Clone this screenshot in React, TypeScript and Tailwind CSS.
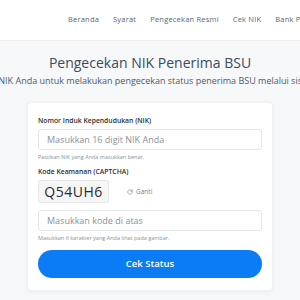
import React from 'react';

export default function App() {
  const font = { fontFamily: '"Open Sans", "Noto Sans", sans-serif' };
  return (
    <div className="w-[300px] h-[300px] overflow-hidden bg-[#f7f8fa]" style={font}>
      <header className="h-[41px] bg-white border-b border-[#eef0f2] flex items-center pl-[68px] gap-[14px] whitespace-nowrap text-[7.5px] text-[#5b6570] tracking-[0.2px]">
        <a>Beranda</a>
        <a>Syarat</a>
        <a>Pengecekan Resmi</a>
        <a>Cek NIK</a>
        <a>Bank Penyalur</a>
      </header>

      <div className="flex flex-col items-center">
        <h1 className="mt-[13px] text-[14px] leading-[18px] text-[#3b4b5c] whitespace-nowrap">Pengecekan NIK Penerima BSU</h1>
        <p className="mt-[3px] text-[9px] leading-[12px] text-[#4e5a66] whitespace-nowrap">
          Masukkan NIK Anda untuk melakukan pengecekan status penerima BSU melalui sistem resmi.
        </p>
      </div>

      <div className="mx-[27px] mt-[15px] bg-white rounded-[4px] shadow-[0_1px_4px_rgba(0,0,0,0.06)] border border-[#f0f1f3] px-[10px] pt-[13px] pb-[12px]">
        <label className="block text-[6.8px] leading-[9px] font-semibold text-[#2a2f35]">Nomor Induk Kependudukan (NIK)</label>
        <div className="mt-[4px] h-[21px] border border-[#e3e6ea] rounded-[3px] flex items-center px-[8px] text-[9px] text-[#8a929a]">
          Masukkan 16 digit NIK Anda
        </div>
        <p className="mt-[3px] text-[5.5px] leading-[8px] text-[#8a929a]">Pastikan NIK yang Anda masukkan benar.</p>

        <label className="block mt-[6px] text-[6.8px] leading-[9px] font-semibold text-[#2a2f35]">Kode Keamanan (CAPTCHA)</label>
        <div className="mt-[4px] flex items-center gap-[18px]">
          <div className="w-[71px] h-[23px] bg-[#f6f6f6] border border-[#e8e8e8] rounded-[2px] flex items-center justify-center text-[14px] font-medium tracking-[0.5px] text-[#2b2b2b]">
            Q54UH6
          </div>
          <span className="flex items-center gap-[3px] text-[6.5px] text-[#7a828a]">
            <svg width="6" height="6" viewBox="0 0 24 24" fill="none" stroke="currentColor" strokeWidth="2.5" strokeLinecap="round">
              <path d="M21 12a9 9 0 1 1-3-6.7" />
              <path d="M21 3v6h-6" />
            </svg>
            Ganti
          </span>
        </div>

        <div className="mt-[7px] h-[21px] border border-[#e3e6ea] rounded-[3px] flex items-center px-[8px] text-[9px] text-[#8a929a]">
          Masukkan kode di atas
        </div>
        <p className="mt-[3px] text-[5.5px] leading-[8px] text-[#8a929a]">Masukkan 6 karakter yang Anda lihat pada gambar.</p>

        <button className="mt-[8px] w-full h-[28px] rounded-full bg-[#0b7cf5] text-white text-[9.5px] font-semibold">
          Cek Status
        </button>
      </div>
    </div>
  );
}
